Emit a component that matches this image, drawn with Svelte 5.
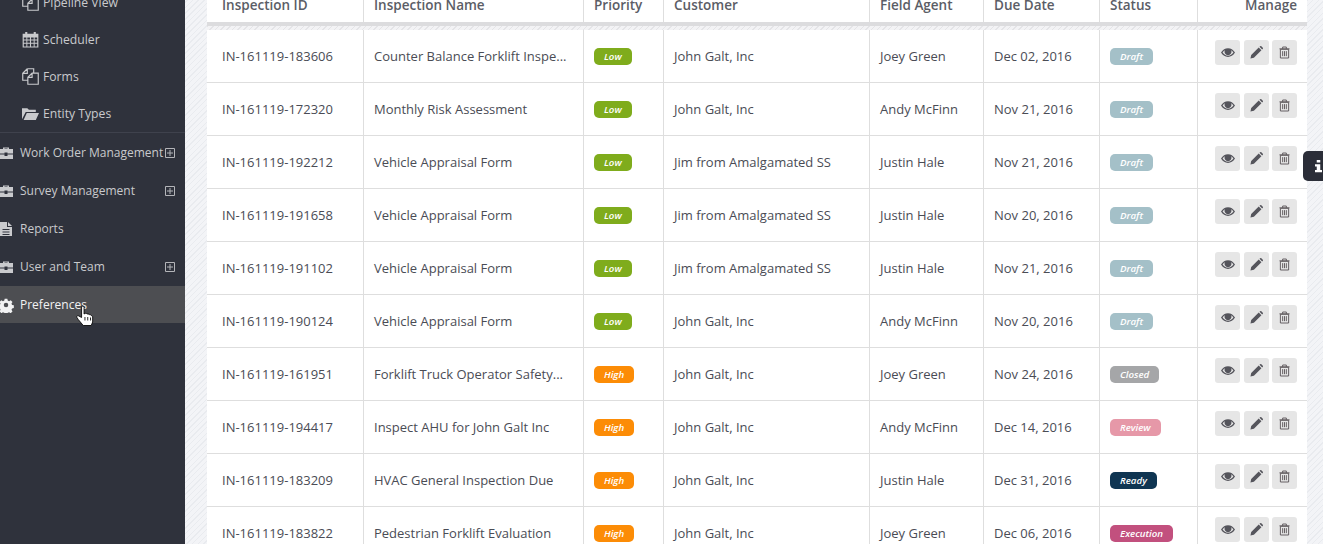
<script>
  const low = { label: "Low", cls: "low" };
  const high = { label: "High", cls: "high" };
  const draft = { label: "Draft", cls: "draft" };

  const rows = [
    ["IN-161119-183606", "Counter Balance Forklift Inspe...", low, "John Galt, Inc", "Joey Green", "Dec 02, 2016", draft],
    ["IN-161119-172320", "Monthly Risk Assessment", low, "John Galt, Inc", "Andy McFinn", "Nov 21, 2016", draft],
    ["IN-161119-192212", "Vehicle Appraisal Form", low, "Jim from Amalgamated SS", "Justin Hale", "Nov 21, 2016", draft],
    ["IN-161119-191658", "Vehicle Appraisal Form", low, "Jim from Amalgamated SS", "Justin Hale", "Nov 20, 2016", draft],
    ["IN-161119-191102", "Vehicle Appraisal Form", low, "Jim from Amalgamated SS", "Justin Hale", "Nov 21, 2016", draft],
    ["IN-161119-190124", "Vehicle Appraisal Form", low, "John Galt, Inc", "Andy McFinn", "Nov 20, 2016", draft],
    ["IN-161119-161951", "Forklift Truck Operator Safety...", high, "John Galt, Inc", "Joey Green", "Nov 24, 2016", { label: "Closed", cls: "closed" }],
    ["IN-161119-194417", "Inspect AHU for John Galt Inc", high, "John Galt, Inc", "Andy McFinn", "Dec 14, 2016", { label: "Review", cls: "review" }],
    ["IN-161119-183209", "HVAC General Inspection Due", high, "John Galt, Inc", "Justin Hale", "Dec 31, 2016", { label: "Ready", cls: "ready" }],
    ["IN-161119-183822", "Pedestrian Forklift Evaluation", high, "John Galt, Inc", "Joey Green", "Dec 06, 2016", { label: "Execution", cls: "execution" }]
  ];

  const subItems = [
    { label: "Pipeline View", icon: "forms" },
    { label: "Scheduler", icon: "calendar" },
    { label: "Forms", icon: "forms" },
    { label: "Entity Types", icon: "folder" }
  ];

  const mainItems = [
    { label: "Work Order Management", icon: "case", plus: true },
    { label: "Survey Management", icon: "case", plus: true },
    { label: "Reports", icon: "file" },
    { label: "User and Team", icon: "case", plus: true },
    { label: "Preferences", icon: "gear", active: true }
  ];
</script>

{#snippet navIcon(name)}
  <svg class="nav-icon" viewBox="0 0 16 16" width="17" height="17">
    {#if name === "forms"}
      <path d="M5 .7H11V4.800M5 .7 .7 5V11.500H5.500M5 .7V5H.7M9.500 4.800H15.300V15.300H5.500V8.800zM9.500 4.800V8.800H5.500" fill="none" stroke="currentColor" stroke-width="1.100"/>
    {:else if name === "calendar"}
      <path fill-rule="evenodd" d="M.6 2.500h2.400V1h2v1.500h6V1h2v1.500h2.400V15.500H.6zM1.700 6v2h2.400V6zm3.300 0v2h2.500V6zm3.500 0v2H11V6zm3.400 0v2h2.400V6zM1.700 9v2h2.400V9zM5 9v2h2.500V9zm3.500 0v2H11V9zM11.900 9v2h2.400V9zM1.700 12v2.500h2.400V12zM5 12v2.500h2.500V12zm3.500 0v2.500H11V12zm3.400 0v2.500h2.400V12z" fill="currentColor"/>
    {:else if name === "folder"}
      <path d="M0 13.500V3h5l1.500 1.500H13V6.500H3.500z M1.500 14 4.500 7.500H16L13 14z" fill="currentColor"/>
    {:else if name === "case"}
      <path fill-rule="evenodd" d="M1 4h4V2.500h6V4h4v4.500H9.500v-1h-3v1H1zM6.500 3.500V4h3v-.5zM1 9.500h5.500v1.500h3V9.500H15V14H1z" fill="currentColor"/>
    {:else if name === "file"}
      <path fill-rule="evenodd" d="M2 1h7v5h5v9H2zM4.500 8v1h7V8zm0 2.500v1h7v-1zm0 2.500v1h7v-1zM10 1l4 4h-4z" fill="currentColor"/>
    {:else if name === "gear"}
      <path fill-rule="evenodd" d="M6.500 1h3l.4 2 1.500.7 1.800-1.100 2 2.100-1.100 1.700.6 1.500 2 .5v3l-2 .4-.6 1.500 1.100 1.800-2 2-1.800-1.100-1.500.6-.4 2h-3l-.4-2-1.500-.6-1.800 1.100-2-2 1.100-1.800-.6-1.500-2-.4v-3l2-.5.6-1.500L.8 4.700l2-2.100 1.800 1.100 1.500-.7zM8 5.500a2.500 2.500 0 1 0 0 5 2.500 2.500 0 0 0 0-5z" fill="currentColor" transform="scale(.9) translate(.9 .9)"/>
    {/if}
  </svg>
{/snippet}

{#snippet actions()}
  <div class="actions">
    <button class="act" aria-label="View">
      <svg viewBox="0 0 16 12" width="14" height="11">
        <path fill-rule="evenodd" d="M0 6c2-3.500 4.800-5 8-5s6 1.500 8 5c-2 3.500-4.800 5-8 5S2 9.500 0 6zm1.800 0C3.400 8.300 5.500 9.700 8 9.700s4.600-1.400 6.200-3.700C13.500 5 12.600 4.100 11.600 3.400a4 4 0 1 1-7.200 0C3.400 4.100 2.500 5 1.800 6z" fill="#55555c"/>
        <circle cx="8" cy="5.400" r="2.600" fill="#55555c"/>
      </svg>
    </button>
    <button class="act" aria-label="Edit">
      <svg viewBox="0 0 14 14" width="13" height="13">
        <path d="M0.500 13.500 1.300 9.800 9.400 1.700 12.300 4.600 4.200 12.700zM10.200 0.900 11 .2a1 1 0 0 1 1.200 0l1.600 1.600a1 1 0 0 1 0 1.200l-.7.800z" fill="#55555c"/>
      </svg>
    </button>
    <button class="act trash" aria-label="Delete">
      <svg viewBox="0 0 12 14" width="11" height="13">
        <path d="M1.500 3.500h9V13H1.500z M0.500 3h11 M4 3V1h4v2 M4 5.500v5.500 M6 5.500v5.500 M8 5.500v5.500" fill="none" stroke="#5a5458" stroke-width="1"/>
      </svg>
    </button>
  </div>
{/snippet}

<div class="page">
  <aside class="sidebar">
    <nav class="sub">
      {#each subItems as item}
        <a class="sub-item" href="#top">
          {@render navIcon(item.icon)}
          <span>{item.label}</span>
        </a>
      {/each}
    </nav>
    <nav class="main-nav">
      {#each mainItems as item}
        <a class="main-item" class:active={item.active} href="#top">
          {@render navIcon(item.icon)}
          <span class="main-label">{item.label}</span>
          {#if item.plus}
            <svg class="plus" viewBox="0 0 10 10" width="10" height="10">
              <path d="M.5.500h9v9h-9z M5 2v6 M2 5h6" fill="none" stroke="currentColor" stroke-width="1"/>
            </svg>
          {/if}
          {#if item.active}
            <svg class="cursor" viewBox="0 0 17 22" width="19" height="22" preserveAspectRatio="none">
              <path d="M5 1.500c1-.8 2.200 0 2.200 1V9l.8-.5c.9-.4 1.700 0 1.900.6.800-.4 1.700-.1 2 .6.800-.3 1.600.1 1.800.8l1.200 1.200v5.300l-1.300 3.500H6.500L2 14.500.7 12.200c-.4-1 .7-1.900 1.700-1.300L5 12.500z" fill="#fff" stroke="#000" stroke-width=".8"/>
              <path d="M8 12v3.500 M10.500 12v3.500 M13 12.500v3" stroke="#000" stroke-width=".8" fill="none"/>
            </svg>
          {/if}
        </a>
      {/each}
    </nav>
  </aside>

  <main class="content">
    <div class="table">
      <div class="row head">
        <div class="cell">Inspection ID</div>
        <div class="cell">Inspection Name</div>
        <div class="cell">Priority</div>
        <div class="cell">Customer</div>
        <div class="cell">Field Agent</div>
        <div class="cell">Due Date</div>
        <div class="cell">Status</div>
        <div class="cell manage">Manage</div>
      </div>
      <div class="head-gap"></div>
      {#each rows as row}
        <div class="row">
          <div class="cell">{row[0]}</div>
          <div class="cell">{row[1]}</div>
          <div class="cell"><span class="tag {row[2].cls}">{row[2].label}</span></div>
          <div class="cell">{row[3]}</div>
          <div class="cell">{row[4]}</div>
          <div class="cell">{row[5]}</div>
          <div class="cell"><span class="tag {row[6].cls}">{row[6].label}</span></div>
          <div class="cell manage-cell">{@render actions()}</div>
        </div>
      {/each}
    </div>
  </main>

  <div class="info-tab">
    <svg viewBox="0 0 8 14" width="7" height="14">
      <path d="M2 0h4v3H2zM0 5h6v6.500h2V14H0v-2.500h2V7.500H0z" fill="#fff"/>
    </svg>
  </div>
</div>

<style>
  :global(body) {
    margin: 0;
    font-family: "Open Sans", sans-serif;
  }

  .page {
    position: relative;
    display: flex;
    height: 544px;
    overflow: hidden;
    background-color: #f1f2f5;
    background-image: repeating-linear-gradient(135deg, #e9ebef 0 1px, #f3f4f7 1px 4px);
  }

  .sidebar {
    width: 185px;
    flex-shrink: 0;
    background: #2f323c;
    color: #c9cacd;
    font-size: 12px;
  }

  .sub {
    margin-top: -16px;
    border-bottom: 1px solid #3f424d;
  }

  .sub-item {
    display: flex;
    align-items: center;
    gap: 4px;
    height: 37px;
    padding-left: 22px;
    color: inherit;
    text-decoration: none;
  }

  .sub-item span {
    font-size: 12.200px;
  }

  .nav-icon {
    flex-shrink: 0;
  }

  .main-nav {
    padding-top: 1px;
  }

  .main-item {
    position: relative;
    display: flex;
    align-items: center;
    height: 38px;
    color: inherit;
    text-decoration: none;
  }

  .main-item .nav-icon {
    width: 16px;
    height: 16px;
    margin-left: -2px;
    margin-right: 6px;
  }

  .main-label {
    flex: 1;
    padding-bottom: 1px;
    white-space: nowrap;
  }

  .plus {
    flex-shrink: 0;
    margin-right: 10px;
    color: #b4b5b9;
  }

  .main-item.active {
    height: 37px;
    background: #4d4e52;
    color: #f2f2f3;
  }

  .cursor {
    position: absolute;
    left: 76px;
    top: 19px;
  }

  .content {
    flex: 1;
    padding: 0 16px 0 22px;
    min-width: 0;
  }

  .table {
    background: #fff;
    color: #4a4c55;
    font-size: 13px;
  }

  .row {
    display: grid;
    grid-template-columns: 157px 220px 80px 206px 114px 116px 98px 109px;
    height: 53px;
    border-bottom: 1px solid #dedede;
    box-sizing: border-box;
  }

  .cell {
    display: flex;
    align-items: center;
    padding-left: 10px;
    border-right: 1px solid #dedede;
    box-sizing: border-box;
    white-space: nowrap;
    overflow: hidden;
  }

  .row .cell:first-child {
    padding-left: 15px;
  }

  .row .cell:last-child {
    border-right: none;
  }

  .head {
    height: 22px;
    border-bottom: none;
    color: #5b5d66;
    font-size: 13.500px;
    font-weight: 600;
  }

  .head .cell {
    height: 22px;
    align-items: flex-end;
    padding-bottom: 12px;
    line-height: 10px;
    overflow: visible;
  }

  .head .manage {
    justify-content: flex-end;
    padding-right: 10px;
  }

  .head-gap {
    height: 8px;
    background-color: #eeeef0;
    background-image: repeating-linear-gradient(135deg, #e4e4e7 0 1px, #f3f3f5 1px 4px);
    border-top: 4px solid #dcdcde;
    box-sizing: border-box;
  }

  .tag {
    display: inline-block;
    min-width: 18px;
    padding: 0 10px;
    height: 17px;
    line-height: 17px;
    border-radius: 5px;
    color: #fff;
    font-size: 9.700px;
    font-style: italic;
    font-weight: 600;
  }

  .low { background: #7fac1c; }
  .high { background: #fc8c06; }
  .draft { background: #a4c0c8; }
  .closed { background: #a5a6a8; }
  .review { background: #e698a8; }
  .ready { background: #0f3552; }
  .execution { background: #c2507e; }

  .manage-cell {
    justify-content: flex-end;
    padding-right: 10px;
    padding-bottom: 7px;
  }

  .actions {
    display: flex;
    gap: 4px;
  }

  .act {
    display: flex;
    align-items: center;
    justify-content: center;
    width: 25px;
    height: 25px;
    padding: 0;
    border: none;
    border-radius: 3px;
    background: #e6e6e6;
  }

  .trash {
    margin-left: -1px;
  }

  .info-tab {
    position: absolute;
    right: 0;
    top: 151px;
    width: 20px;
    height: 30px;
    padding-right: 1px;
    box-sizing: border-box;
    display: flex;
    align-items: center;
    justify-content: flex-end;
    border-radius: 5px 0 0 5px;
    background: #2b2e38;
  }
</style>
